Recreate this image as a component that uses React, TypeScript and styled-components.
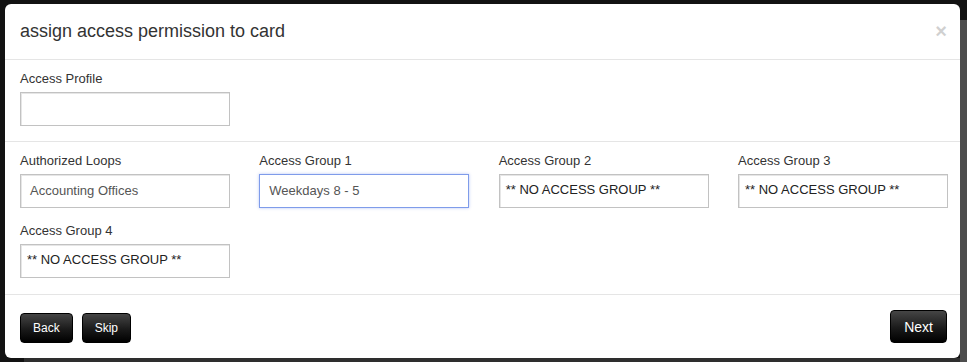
import React from "react";
import styled, { createGlobalStyle, css } from "styled-components";

const Global = createGlobalStyle`
  html, body { margin: 0; padding: 0; }
  body {
    font-family: "Liberation Sans", Arial, sans-serif;
    background: #121212;
    overflow: hidden;
  }
  * { box-sizing: border-box; }
`;

const Backdrop = styled.div`
  width: 967px;
  height: 362px;
  padding: 4px 7px 4px 5px;
  background:
    linear-gradient(to right, transparent 0, transparent 960px, #4d4d4d 960px) 0 20px / 100% 100% no-repeat,
    linear-gradient(to bottom, transparent 0, transparent 358px, #2e2e2e 358px) 24px 0 / 100% 100% no-repeat,
    #121212;
`;

const Modal = styled.div`
  width: 955px;
  height: 354px;
  background: #fff;
  border-radius: 6px;
  display: flex;
  flex-direction: column;
  overflow: hidden;
`;

const Header = styled.div`
  display: flex;
  align-items: center;
  justify-content: space-between;
  padding: 15px 13px 15px 15px;
  border-bottom: 1px solid #e5e5e5;
`;

const Title = styled.h4`
  margin: 0;
  font-size: 18px;
  line-height: 24.5px;
  font-weight: normal;
  color: #333;
`;

const Close = styled.button`
  border: 0;
  background: transparent;
  padding: 0;
  font-family: "Liberation Sans", Arial, sans-serif;
  font-size: 20px;
  font-weight: bold;
  line-height: 1;
  color: #000;
  opacity: 0.18;
  cursor: pointer;
  margin-top: -1px;
`;

const Section = styled.div<{ $last?: boolean }>`
  padding: 10px 12px ${(p) => (p.$last ? "16px" : "15px")} 15px;
  border-bottom: 1px solid #e5e5e5;
`;

const Grid = styled.div`
  display: grid;
  grid-template-columns: repeat(4, 210px);
  justify-content: space-between;
  row-gap: 14px;
`;

const Group = styled.div`
  display: flex;
  flex-direction: column;
  gap: 4px;
  width: 210px;
`;

const Label = styled.label`
  font-size: 13px;
  line-height: 18px;
  color: #333;
`;

const Field = styled.div<{ $focused?: boolean; $select?: boolean }>`
  height: 34px;
  width: 210px;
  display: flex;
  align-items: center;
  border: 1px solid #c2c2c2;
  box-shadow: inset 1px 1px 0 #e6e6e6;
  font-size: 13px;
  color: #555;
  padding: 0 9px;
  white-space: nowrap;
  ${(p) =>
    p.$select &&
    css`
      color: #222;
      padding: 0 6px;
      padding-bottom: 3px;
    `}
  ${(p) =>
    p.$focused &&
    css`
      border: 1px solid #7f9cea;
      box-shadow: 0 0 3px rgba(102, 130, 233, 0.45);
    `}
`;

const Footer = styled.div`
  flex: 1;
  display: flex;
  align-items: flex-end;
  justify-content: space-between;
  padding: 0 13px 15px 15px;
`;

const ButtonRow = styled.div`
  display: flex;
  gap: 9px;
`;

const Button = styled.button<{ $large?: boolean }>`
  font-family: "Liberation Sans", Arial, sans-serif;
  color: #fff;
  border: 1px solid #000;
  border-radius: 4px;
  background: linear-gradient(to bottom, #454545 0%, #1a1a1a 55%, #000 100%);
  cursor: pointer;
  font-size: ${(p) => (p.$large ? "14px" : "12px")};
  height: ${(p) => (p.$large ? "33px" : "30px")};
  padding: 0 ${(p) => (p.$large ? "13px" : "12px")};
  line-height: 1;
`;

const groups: { label: string; value: string; select?: boolean; focused?: boolean }[] = [
  { label: "Authorized Loops", value: "Accounting Offices" },
  { label: "Access Group 1", value: "Weekdays 8 - 5", focused: true },
  { label: "Access Group 2", value: "** NO ACCESS GROUP **", select: true },
  { label: "Access Group 3", value: "** NO ACCESS GROUP **", select: true },
  { label: "Access Group 4", value: "** NO ACCESS GROUP **", select: true },
];

export default function App() {
  return (
    <>
      <Global />
      <Backdrop>
        <Modal>
          <Header>
            <Title>assign access permission to card</Title>
            <Close aria-label="Close">×</Close>
          </Header>
          <Section>
            <Group>
              <Label>Access Profile</Label>
              <Field />
            </Group>
          </Section>
          <Section $last>
            <Grid>
              {groups.map((g) => (
                <Group key={g.label}>
                  <Label>{g.label}</Label>
                  <Field $select={g.select} $focused={g.focused}>
                    {g.value}
                  </Field>
                </Group>
              ))}
            </Grid>
          </Section>
          <Footer>
            <ButtonRow>
              <Button>Back</Button>
              <Button>Skip</Button>
            </ButtonRow>
            <Button $large>Next</Button>
          </Footer>
        </Modal>
      </Backdrop>
    </>
  );
}
